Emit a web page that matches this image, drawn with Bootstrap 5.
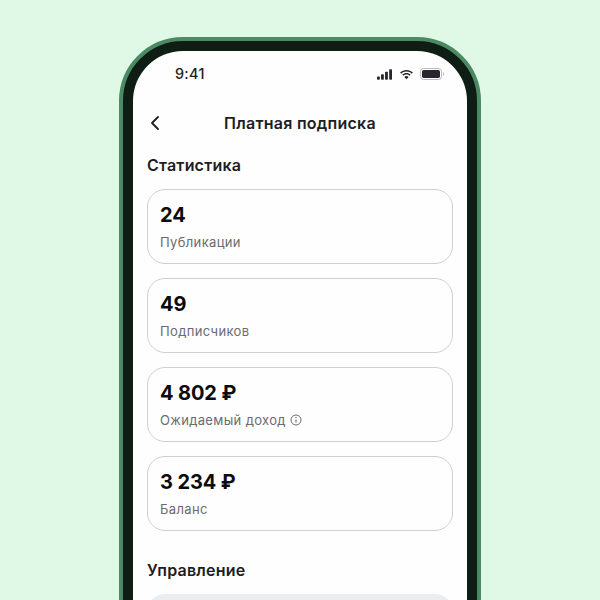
<!doctype html>
<html lang="ru"><head><meta charset="utf-8">
<link rel="stylesheet" href="https://cdn.jsdelivr.net/npm/bootstrap@5.3.0/dist/css/bootstrap.min.css">
<style>
html,body{height:600px;overflow:hidden}
body{background:#dff9e6;font-family:Inter,"Noto Sans",sans-serif;color:#1d1d22}
.stage{padding-top:37px;height:600px;overflow:hidden}
.phone-shell{width:362px;height:640px;border:4px solid #4b8a62;border-radius:64px;background:#0f1e14;padding:10px;box-shadow:inset 0 0 0 1px #0f1e14}
.phone-screen{height:100%;background:#fefefe;border-radius:50px;overflow:hidden;padding:0 14px}
.status-row{height:46px;padding:0 9px 0 28px}
.clock{font-size:14.4px;font-weight:500;letter-spacing:.3px}
.sig-icon{margin-right:3px}
.batt-icon{margin-left:2px}
.title-row{height:44px;margin-top:4px}
.back-btn{left:3px;top:50%;transform:translateY(-50%);line-height:0}
.page-title{font-size:16px;font-weight:600;letter-spacing:.25px}
.sec-head{font-size:16px;font-weight:600;letter-spacing:.2px;line-height:20px}
.stat-box{height:75px;border:1px solid #cfcfd2;border-radius:18px;padding:13px 12px 0;margin-bottom:14px}
.stat-num{font-size:20px;font-weight:700;line-height:24px;color:#0c0c0e;letter-spacing:-.1px}
.stat-label{font-size:13px;line-height:16px;color:#6b6b70;margin-top:7px;letter-spacing:.35px}
.first-head{margin-top:10px;margin-bottom:14px}
.second-head{margin-top:29px;margin-bottom:14px}
.manage-box{height:60px;border-radius:18px;background:#ecedef}
</style></head><body>
<div class="stage d-flex justify-content-center">
<div class="phone-shell">
<div class="phone-screen">
<div class="status-row d-flex align-items-center justify-content-between">
<span class="clock">9:41</span>
<span class="d-flex align-items-center gap-1">
<svg class="sig-icon" width="15" height="11" viewBox="0 0 16 11" fill="#26262e"><rect x="0" y="7.5" width="3" height="3.5" rx=".8"/><rect x="4.3" y="5.2" width="3" height="5.8" rx=".8"/><rect x="8.6" y="2.6" width="3" height="8.4" rx=".8"/><rect x="13" y="0" width="3" height="11" rx=".8"/></svg>
<svg width="15" height="11" viewBox="0 0 16 11" fill="#26262e"><path d="M8 2.3c2.2 0 4.2.9 5.7 2.3l1.1-1.2C13 1.7 10.6.6 8 .6S3 1.7 1.2 3.400l1.100 1.200C3.800 3.200 5.800 2.300 8 2.300z"/><path d="M8 5.600c1.300 0 2.500.5 3.400 1.300l1.100-1.200C11.300 4.600 9.700 3.900 8 3.900s-3.300.7-4.500 1.800l1.100 1.200C5.500 6.100 6.700 5.600 8 5.600z"/><path d="M8 7.200c-.9 0-1.700.3-2.300.9L8 10.600l2.300-2.500c-.6-.6-1.400-.9-2.300-.9z"/></svg>
<svg class="batt-icon" width="24" height="12" viewBox="0 0 24 12"><rect x=".5" y=".5" width="21" height="11" rx="3" fill="none" stroke="#b9b9be"/><rect x="2" y="2" width="18" height="8" rx="1.800" fill="#26262e"/><path d="M23 4v4c.7-.3 1-1.100 1-2s-.3-1.700-1-2z" fill="#b9b9be"/></svg>
</span>
</div>
<div class="title-row position-relative d-flex align-items-center justify-content-center">
<span class="back-btn position-absolute"><svg width="10" height="16" viewBox="0 0 10 16" fill="none" stroke="#1d1d22" stroke-width="1.800" stroke-linecap="round" stroke-linejoin="round"><path d="M8 2 2 8l6 6"/></svg></span>
<span class="page-title">Платная подписка</span>
</div>
<div class="sec-head first-head">Статистика</div>
<div class="stat-box"><div class="stat-num">24</div><div class="stat-label">Публикации</div></div>
<div class="stat-box"><div class="stat-num">49</div><div class="stat-label">Подписчиков</div></div>
<div class="stat-box"><div class="stat-num">4 802 ₽</div><div class="stat-label d-flex align-items-center gap-1">Ожидаемый доход <svg width="12" height="12" viewBox="0 0 12 12" fill="none" stroke="#6b6b70"><circle cx="6" cy="6" r="5"/><path d="M6 5.400v3.200" stroke-width="1.200"/><circle cx="6" cy="3.500" r=".7" fill="#6b6b70" stroke="none"/></svg></div></div>
<div class="stat-box"><div class="stat-num">3 234 ₽</div><div class="stat-label">Баланс</div></div>
<div class="sec-head second-head">Управление</div>
<div class="manage-box"></div>
</div></div></div>
<script src="https://cdn.jsdelivr.net/npm/bootstrap@5.3.0/dist/js/bootstrap.bundle.min.js"></script>
</body></html>
